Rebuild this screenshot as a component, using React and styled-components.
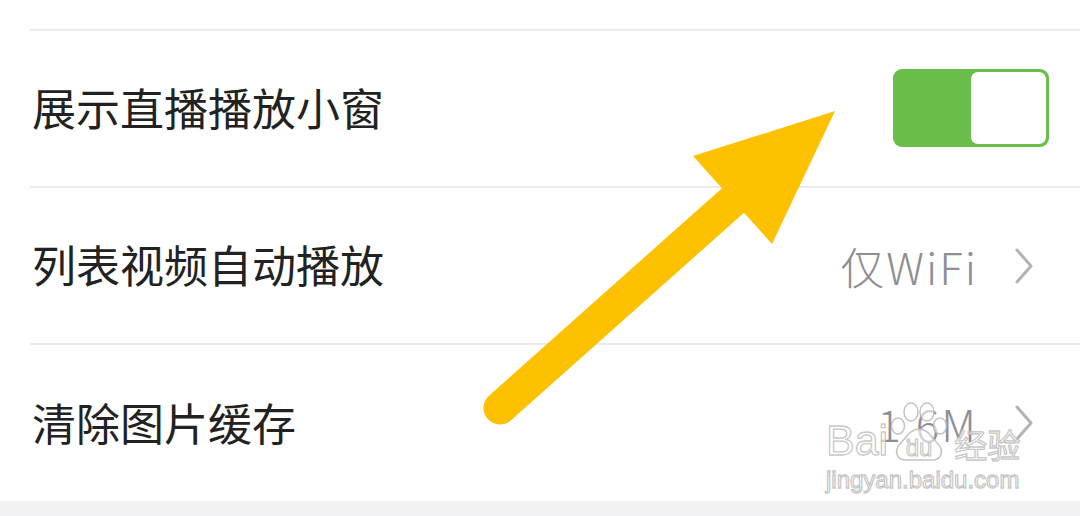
import React from "react";
import styled, { createGlobalStyle } from "styled-components";

const GlobalStyle = createGlobalStyle`
  html, body {
    margin: 0;
    padding: 0;
    background: #fff;
  }
  body {
    font-family: "Noto Sans CJK SC", "Noto Sans", sans-serif;
  }
`;

const Page = styled.div`
  position: relative;
  width: 1080px;
  height: 516px;
  overflow: hidden;
  background: #fff;
  display: flex;
  flex-direction: column;
`;

const List = styled.div`
  padding-left: 30px;
`;

const Row = styled.div`
  height: ${({ h }) => h}px;
  box-sizing: border-box;
  border-bottom: ${({ last }) => (last ? "none" : "2px solid #ebebed")};
  display: flex;
  align-items: center;
  justify-content: space-between;
  padding: 0 31px 0 2px;
`;

const Label = styled.span`
  font-size: 44px;
  font-weight: 400;
  color: #222;
  line-height: 1;
  margin-top: -3px;
`;

const Value = styled.div`
  display: flex;
  align-items: center;
  gap: 36px;
  margin-right: 15px;
  color: #8e8e93;
  font-size: 44px;
  font-weight: 300;
  line-height: 1;
`;

const ValueText = styled.span`
  letter-spacing: ${({ spacing }) => spacing || 0}px;
`;

const Toggle = styled.div`
  width: 156px;
  height: 78px;
  box-sizing: border-box;
  border-radius: 9px;
  background: #6abf4b;
  display: flex;
  justify-content: flex-end;
  padding: 3px;
  margin-top: -2px;
`;

const Knob = styled.div`
  width: 75px;
  height: 100%;
  border-radius: 7px;
  background: #fff;
`;

const Footer = styled.div`
  flex: 1;
  background: #f2f2f4;
`;

const Overlay = styled.svg`
  position: absolute;
  left: 0;
  top: 0;
  pointer-events: none;
`;

const Watermark = styled.div`
  position: absolute;
  left: 826px;
  top: 400px;
  display: flex;
  flex-direction: column;
  align-items: flex-start;
  color: rgba(255, 255, 255, 0.6);
  -webkit-text-stroke: 1.3px rgba(185, 185, 185, 0.8);
  pointer-events: none;
`;

const MarkTop = styled.div`
  display: flex;
  align-items: flex-end;
  height: 62px;
`;

const MarkLatin = styled.span`
  font-family: "Liberation Sans", Arial, sans-serif;
  font-size: ${({ size }) => size}px;
  line-height: 1;
`;

const MarkCjk = styled.span`
  font-family: "Noto Sans CJK SC", sans-serif;
  font-size: 33px;
  line-height: 1;
  margin-left: 6px;
  margin-bottom: 1px;
`;

const Chevron = () => (
  <svg width="20" height="36" viewBox="0 0 20 36">
    <path
      d="M3 2 L17 18 L3 34"
      fill="none"
      stroke="#b3b3b8"
      strokeWidth="3"
      strokeLinecap="round"
      strokeLinejoin="round"
    />
  </svg>
);

const Paw = () => (
  <svg width="58" height="60" viewBox="0 0 58 60" style={{ marginLeft: 2 }}>
    <g fill="rgba(255,255,255,0.6)" stroke="rgba(185,185,185,0.85)" strokeWidth="1.5">
      <ellipse cx="21" cy="10" rx="7" ry="9" />
      <ellipse cx="37" cy="10" rx="7" ry="9" />
      <ellipse cx="8" cy="24" rx="6.5" ry="8" />
      <ellipse cx="50" cy="24" rx="6.5" ry="8" />
      <path d="M29 27 C20 27 16 36 10 42 C4 48 6 58 16 58 L42 58 C52 58 54 48 48 42 C42 36 38 27 29 27 Z" />
    </g>
    <text
      x="29"
      y="54"
      textAnchor="middle"
      fontFamily="Liberation Sans, Arial, sans-serif"
      fontSize="24"
      fill="rgba(255,255,255,0.6)"
      stroke="rgba(185,185,185,0.85)"
      strokeWidth="1.1"
    >
      du
    </text>
  </svg>
);

export default function App() {
  return (
    <>
      <GlobalStyle />
      <Page>
        <List>
          <Row h={31} />
          <Row h={157}>
            <Label>展示直播播放小窗</Label>
            <Toggle>
              <Knob />
            </Toggle>
          </Row>
          <Row h={157}>
            <Label>列表视频自动播放</Label>
            <Value>
              <ValueText spacing={2}>仅WiFi</ValueText>
              <Chevron />
            </Value>
          </Row>
          <Row h={156} last>
            <Label>清除图片缓存</Label>
            <Value>
              <ValueText spacing={2}>1.6M</ValueText>
              <Chevron />
            </Value>
          </Row>
        </List>
        <Footer />

        <Overlay width="1080" height="516" viewBox="0 0 1080 516">
          <line
            x1="500"
            y1="408"
            x2="738"
            y2="196"
            stroke="#fdc100"
            strokeWidth="33"
            strokeLinecap="round"
          />
          <polygon points="835,111 693,156 772,244" fill="#fdc100" />
        </Overlay>

        <Watermark>
          <MarkTop>
            <MarkLatin size={43}>Bai</MarkLatin>
            <Paw />
            <MarkCjk>经验</MarkCjk>
          </MarkTop>
          <MarkLatin size={24} style={{ marginTop: 6 }}>
            jingyan.baidu.com
          </MarkLatin>
        </Watermark>
      </Page>
    </>
  );
}
